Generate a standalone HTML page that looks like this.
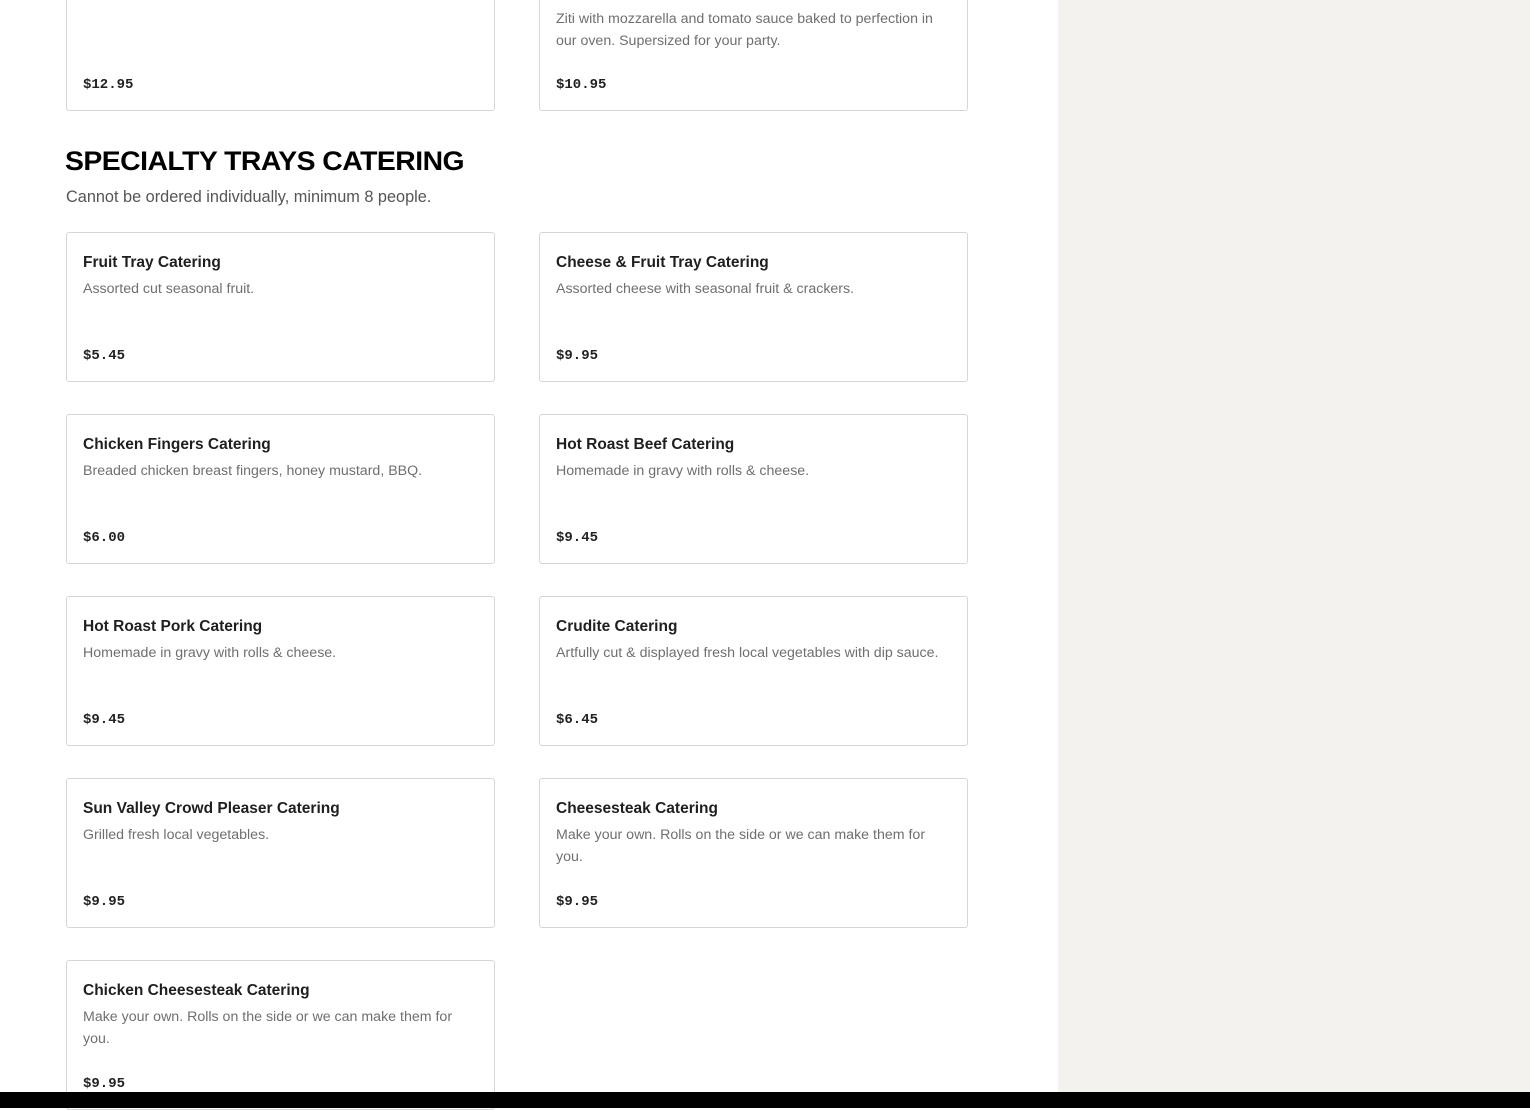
<!DOCTYPE html>
<html><head><meta charset="utf-8"><style>
*{margin:0;padding:0;box-sizing:border-box}
body{width:1530px;height:1108px;overflow:hidden;background:#fff;position:relative;font-family:"Liberation Sans",sans-serif}
.side{position:absolute;left:1058px;top:0;width:472px;height:1108px;background:#f3f2ef}
.bar{position:absolute;left:0;top:1092px;width:1530px;height:16px;background:#000}
.card{position:absolute;width:429px;height:150px;border:1px solid #d6d6d6;border-radius:3px;background:#fff}
.t{position:absolute;left:16px;top:19px;font-size:15.5px;line-height:22px;font-weight:bold;color:#1f1f1f;white-space:nowrap}
.d{position:absolute;left:16px;top:45px;right:14px;font-size:14.2px;line-height:22px;color:#6f6f6f}
.p{position:absolute;left:16px;top:112px;font-family:"Liberation Mono",monospace;font-size:14px;line-height:22px;font-weight:bold;color:#222}
h1{position:absolute;left:65px;top:144px;font-size:27px;line-height:34px;font-weight:900;color:#000;letter-spacing:-0.5px;transform:scaleX(1.05);transform-origin:left}
.sub{position:absolute;left:66px;top:186px;font-size:16.3px;line-height:22px;color:#555}
</style></head><body>
<div class="side"></div>
<div class="card" style="left:66px;top:-39px"><div class="p">$12.95</div></div>
<div class="card" style="left:539px;top:-39px"><div class="d" style="top:46px">Ziti with mozzarella and tomato sauce baked to perfection in our oven. Supersized for your party.</div><div class="p">$10.95</div></div>
<h1>SPECIALTY TRAYS CATERING</h1>
<div class="sub">Cannot be ordered individually, minimum 8 people.</div>

<div class="card" style="left:66px;top:232px"><div class="t">Fruit Tray Catering</div><div class="d">Assorted cut seasonal fruit.</div><div class="p">$5.45</div></div>
<div class="card" style="left:539px;top:232px"><div class="t">Cheese &amp; Fruit Tray Catering</div><div class="d">Assorted cheese with seasonal fruit &amp; crackers.</div><div class="p">$9.95</div></div>

<div class="card" style="left:66px;top:414px"><div class="t">Chicken Fingers Catering</div><div class="d">Breaded chicken breast fingers, honey mustard, BBQ.</div><div class="p">$6.00</div></div>
<div class="card" style="left:539px;top:414px"><div class="t">Hot Roast Beef Catering</div><div class="d">Homemade in gravy with rolls &amp; cheese.</div><div class="p">$9.45</div></div>

<div class="card" style="left:66px;top:596px"><div class="t">Hot Roast Pork Catering</div><div class="d">Homemade in gravy with rolls &amp; cheese.</div><div class="p">$9.45</div></div>
<div class="card" style="left:539px;top:596px"><div class="t">Crudite Catering</div><div class="d" style="right:4px">Artfully cut &amp; displayed fresh local vegetables with dip sauce.</div><div class="p">$6.45</div></div>

<div class="card" style="left:66px;top:778px"><div class="t">Sun Valley Crowd Pleaser Catering</div><div class="d">Grilled fresh local vegetables.</div><div class="p">$9.95</div></div>
<div class="card" style="left:539px;top:778px"><div class="t">Cheesesteak Catering</div><div class="d" style="right:30px">Make your own. Rolls on the side or we can make them for you.</div><div class="p">$9.95</div></div>

<div class="card" style="left:66px;top:960px"><div class="t">Chicken Cheesesteak Catering</div><div class="d" style="right:30px">Make your own. Rolls on the side or we can make them for you.</div><div class="p">$9.95</div></div>
<div class="bar"></div>
</body></html>
